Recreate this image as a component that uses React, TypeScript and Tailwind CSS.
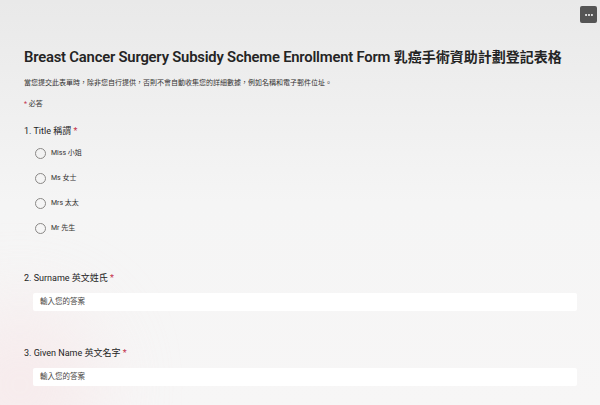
import {MoreHorizontal} from "lucide-react"

const font = {fontFamily: 'Roboto, "Noto Sans CJK TC", sans-serif'}

const titles = ["Miss 小姐", "Ms 女士", "Mrs 太太", "Mr 先生"]

function Required() {
  return <span className="text-[#c4314b]"> *</span>
}

function QuestionLabel({children}: {children: React.ReactNode}) {
  return (
    <div className="text-[9px] leading-[12px] text-[#242424]">
      {children}
      <Required />
    </div>
  )
}

function TextQuestion({label}: {label: string}) {
  return (
    <div className="flex flex-col">
      <QuestionLabel>{label}</QuestionLabel>
      <div className="ml-[9px] mt-[9px] flex h-[18px] items-center rounded-[2px] bg-white px-[7px] text-[7.5px] text-[#484644]">
        輸入您的答案
      </div>
    </div>
  )
}

export default function App() {
  return (
    <div
      className="relative h-[405px] w-[600px] overflow-hidden bg-gradient-to-b from-[#e9e9e9] via-[#f5f5f5] to-[#f7f6f6]"
      style={font}
    >
      <div className="absolute -bottom-[60px] -left-[60px] h-[160px] w-[160px] rounded-full bg-[#f7e4e6] opacity-60 blur-2xl" />

      <button className="absolute right-[3px] top-[6px] flex h-[17px] w-[17px] items-center justify-center rounded-[2px] bg-[#555555] text-white">
        <MoreHorizontal className="h-[10px] w-[10px]" strokeWidth={3} />
      </button>

      <div className="relative flex flex-col pl-[24px] pr-[23px] pt-[45px]">
        <h1 className="whitespace-nowrap text-[14.8px] font-semibold leading-[24px] tracking-[-0.2px] text-[#242424]">
          Breast Cancer Surgery Subsidy Scheme Enrollment Form{" "}
          <span className="text-[14px] tracking-normal">乳癌手術資助計劃登記表格</span>
        </h1>
        <p className="mt-[9px] text-[7px] leading-[10px] text-[#323130]">
          當您提交此表單時，除非您自行提供，否則不會自動收集您的詳細數據，例如名稱和電子郵件位址。
        </p>
        <p className="mt-[11px] text-[7px] leading-[10px] text-[#323130]">
          <span className="text-[#c4314b]">*</span> 必答
        </p>

        <div className="mt-[16px] flex flex-col">
          <QuestionLabel>1. Title 稱謂</QuestionLabel>
          <div className="ml-[11px] mt-[10px] flex flex-col gap-[13px]">
            {titles.map((t) => (
              <label key={t} className="flex h-[12px] items-center gap-[5px]">
                <span className="h-[11px] w-[11px] rounded-full border border-[#8a8886]" />
                <span className="text-[7px] text-[#323130]">{t}</span>
              </label>
            ))}
          </div>
        </div>

        <div className="mt-[38px]">
          <TextQuestion label="2. Surname 英文姓氏" />
        </div>
        <div className="mt-[36px]">
          <TextQuestion label="3. Given Name 英文名字" />
        </div>
      </div>
    </div>
  )
}
